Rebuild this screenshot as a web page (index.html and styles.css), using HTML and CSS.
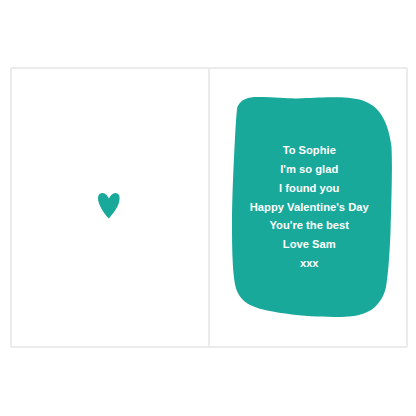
FILE: index.html
```html
<!DOCTYPE html>
<html lang="en">
<head>
<meta charset="utf-8">
<title>Valentine's card</title>
<link rel="stylesheet" href="styles.css">
</head>
<body>
<main class="card">
  <section class="page page-left">
    <svg class="heart" viewBox="0 0 22 26" aria-hidden="true">
      <path d="M10.9 5.6C9.6 2.8 7.4 0.2 4.4 0C1.6 -0.1 0 2.2 0 5.2C0 11.5 5.8 20.3 10.6 25.2C11 25.2 11.3 25 11.7 24.4C15.8 19.6 21.6 12.6 21.6 5.2C21.6 2.2 20.2 0 17.4 0C14.5 0.2 12.2 2.8 10.9 5.6Z"/>
    </svg>
  </section>
  <section class="page page-right">
    <div class="message">
      <svg class="blob" viewBox="0 0 160 221" aria-hidden="true">
        <path d="M5.3 10.2C6.5 6.5 9.5 3.6 13 2.2C17 0.6 21 0.1 25 0.1C45 0.3 55 1.6 65 1.4C80 1 90 0 105 0.3C115 0.5 125 1.5 132 4C140 7 146 12 150 19C155 27 158 38 159.5 50C160.5 70 159.5 100 158.5 135C157.5 160 156 178 154 190C152 199 148 205 143 210C137 215 130 218 120 219.3C110 220.5 100 220 85 219.5C70 219 50 216.5 35 213.5C25 211.3 16 208 11 203C6 198 3.5 192 2.3 183C0.5 170 0 150 0 130C0 100 2 60 3.3 35C4 25 4.5 15 5.3 10.2Z"/>
      </svg>
      <p class="line">To Sophie</p>
      <p class="line">I'm so glad</p>
      <p class="line">I found you</p>
      <p class="line">Happy Valentine's Day</p>
      <p class="line">You're the best</p>
      <p class="line">Love Sam</p>
      <p class="line">xxx</p>
    </div>
  </section>
</main>
</body>
</html>
```
FILE: styles.css
```css
html, body {
  margin: 0;
  padding: 0;
  background: #ffffff;
}
body {
  width: 416px;
  height: 416px;
  padding: 67px 0 0 9.5px;
  box-sizing: border-box;
}
.card {
  width: 398.5px;
  height: 281px;
  box-sizing: border-box;
  display: grid;
  grid-template-columns: 198.5px 1fr;
  background: #ffffff;
  border: 2px solid #ebebeb;
  border-radius: 2px;
}
.page {
  min-width: 0;
}
.page-left {
  display: flex;
  justify-content: center;
  box-sizing: border-box;
  padding: 124px 2px 0 0;
  border-right: 2.5px solid #ebebeb;
}
.heart {
  display: block;
  width: 22px;
  height: 26px;
  fill: #18a99b;
}
.page-right {
  padding: 27.5px 0 0 21.5px;
}
.message {
  position: relative;
  width: 160px;
  height: 221px;
  padding: 44.8px 4.5px 0 0;
  box-sizing: border-box;
  font-family: "Liberation Sans", Arial, sans-serif;
  font-size: 11.2px;
  font-weight: 700;
  color: #ffffff;
  text-align: center;
}
.blob {
  position: absolute;
  top: 0;
  left: 0;
  width: 160px;
  height: 221px;
  fill: #18a99b;
}
.line {
  position: relative;
  margin: 0;
  height: 18.8px;
  line-height: 18.8px;
  white-space: nowrap;
}
```
